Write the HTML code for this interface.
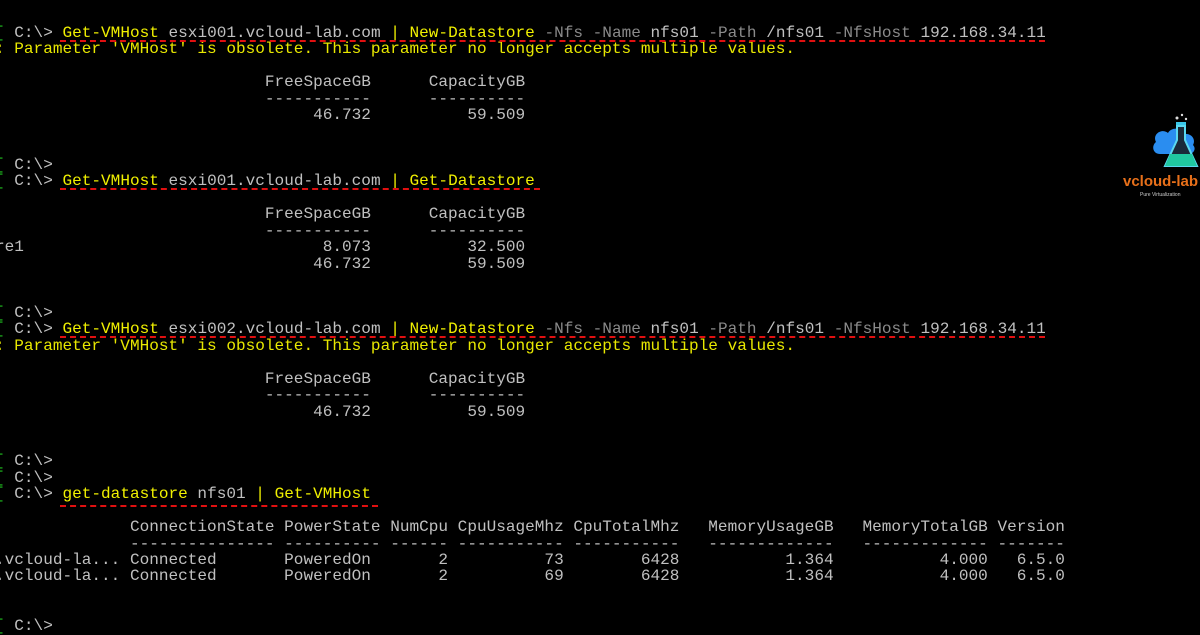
<!DOCTYPE html>
<html><head><meta charset="utf-8"><style>
html,body{margin:0;padding:0;background:#000;width:1200px;height:630px;overflow:hidden}
#t{position:absolute;left:-5px;top:25px;margin:0;font-family:"Liberation Mono",monospace;font-size:16.07px;color:#c0c0c0}
#t div{height:16.47px;line-height:16.47px;overflow:visible;white-space:pre}
.g{color:#20c020}.y{color:#f0f000}.d{color:#8a8a8a}.w{color:#e8e800}
.u{position:absolute;height:0;border-top:2px dashed #e01010}
.logo{position:absolute;left:1120px;top:112px;width:80px;height:90px}
</style></head><body>
<div id="t"><div><span class="g">[</span> C:\&gt; <span class="y">Get-VMHost</span> esxi001.vcloud-lab.com <span class="y">|</span> <span class="y">New-Datastore</span> <span class="d">-Nfs -Name</span> nfs01 <span class="d">-Path</span> /nfs01 <span class="d">-NfsHost</span> 192.168.34.11</div><div><span class="w">: Parameter 'VMHost' is obsolete. This parameter no longer accepts multiple values.</span></div><div></div><div>                            FreeSpaceGB      CapacityGB</div><div>                            -----------      ----------</div><div>                                 46.732          59.509</div><div></div><div></div><div><span class="g">[</span> C:\&gt;</div><div><span class="g">[</span> C:\&gt; <span class="y">Get-VMHost</span> esxi001.vcloud-lab.com <span class="y">|</span> <span class="y">Get-Datastore</span></div><div></div><div>                            FreeSpaceGB      CapacityGB</div><div>                            -----------      ----------</div><div>re1                               8.073          32.500</div><div>                                 46.732          59.509</div><div></div><div></div><div><span class="g">[</span> C:\&gt;</div><div><span class="g">[</span> C:\&gt; <span class="y">Get-VMHost</span> esxi002.vcloud-lab.com <span class="y">|</span> <span class="y">New-Datastore</span> <span class="d">-Nfs -Name</span> nfs01 <span class="d">-Path</span> /nfs01 <span class="d">-NfsHost</span> 192.168.34.11</div><div><span class="w">: Parameter 'VMHost' is obsolete. This parameter no longer accepts multiple values.</span></div><div></div><div>                            FreeSpaceGB      CapacityGB</div><div>                            -----------      ----------</div><div>                                 46.732          59.509</div><div></div><div></div><div><span class="g">[</span> C:\&gt;</div><div><span class="g">[</span> C:\&gt;</div><div><span class="g">[</span> C:\&gt; <span class="y">get-datastore</span> nfs01 <span class="y">|</span> <span class="y">Get-VMHost</span></div><div></div><div>              ConnectionState PowerState NumCpu CpuUsageMhz CpuTotalMhz   MemoryUsageGB   MemoryTotalGB Version</div><div>              --------------- ---------- ------ ----------- -----------   -------------   ------------- -------</div><div>.vcloud-la... Connected       PoweredOn       2          73        6428           1.364           4.000   6.5.0</div><div>.vcloud-la... Connected       PoweredOn       2          69        6428           1.364           4.000   6.5.0</div><div></div><div></div><div><span class="g">[</span> C:\&gt;</div></div>
<div class="u" style="left:60px;top:40px;width:985px"></div>
<div class="u" style="left:60px;top:188px;width:480px"></div>
<div class="u" style="left:60px;top:336px;width:985px"></div>
<div class="u" style="left:60px;top:505px;width:318px"></div>
<svg class="logo" viewBox="0 0 80 90">
<circle cx="57" cy="6" r="1.5" fill="#ddd"/><circle cx="62" cy="3" r="1.2" fill="#ddd"/><circle cx="66" cy="7" r="1.2" fill="#ddd"/>
<path d="M36 30c-4-8 6-14 12-9c3-6 14-6 16 1c8-1 12 6 9 11c4 4 0 10-6 9H40c-7 0-9-8-4-12z" fill="#2a8df0"/>
<rect x="56" y="10" width="10" height="4" fill="#39c6e8"/>
<path d="M57 14v14l-12 26h32l-12-26V14z" fill="#1a2a3a" stroke="#5ad8f0" stroke-width="2"/>
<path d="M50 42h22l5 12H45z" fill="#20c8a0"/>
<text x="3" y="74" font-family="Liberation Sans,sans-serif" font-weight="bold" font-size="15" fill="#e8701a">vcloud-lab</text>
<text x="20" y="84" font-family="Liberation Sans,sans-serif" font-size="5" fill="#ccc">Pure Virtualization</text>
</svg>
</body></html>
